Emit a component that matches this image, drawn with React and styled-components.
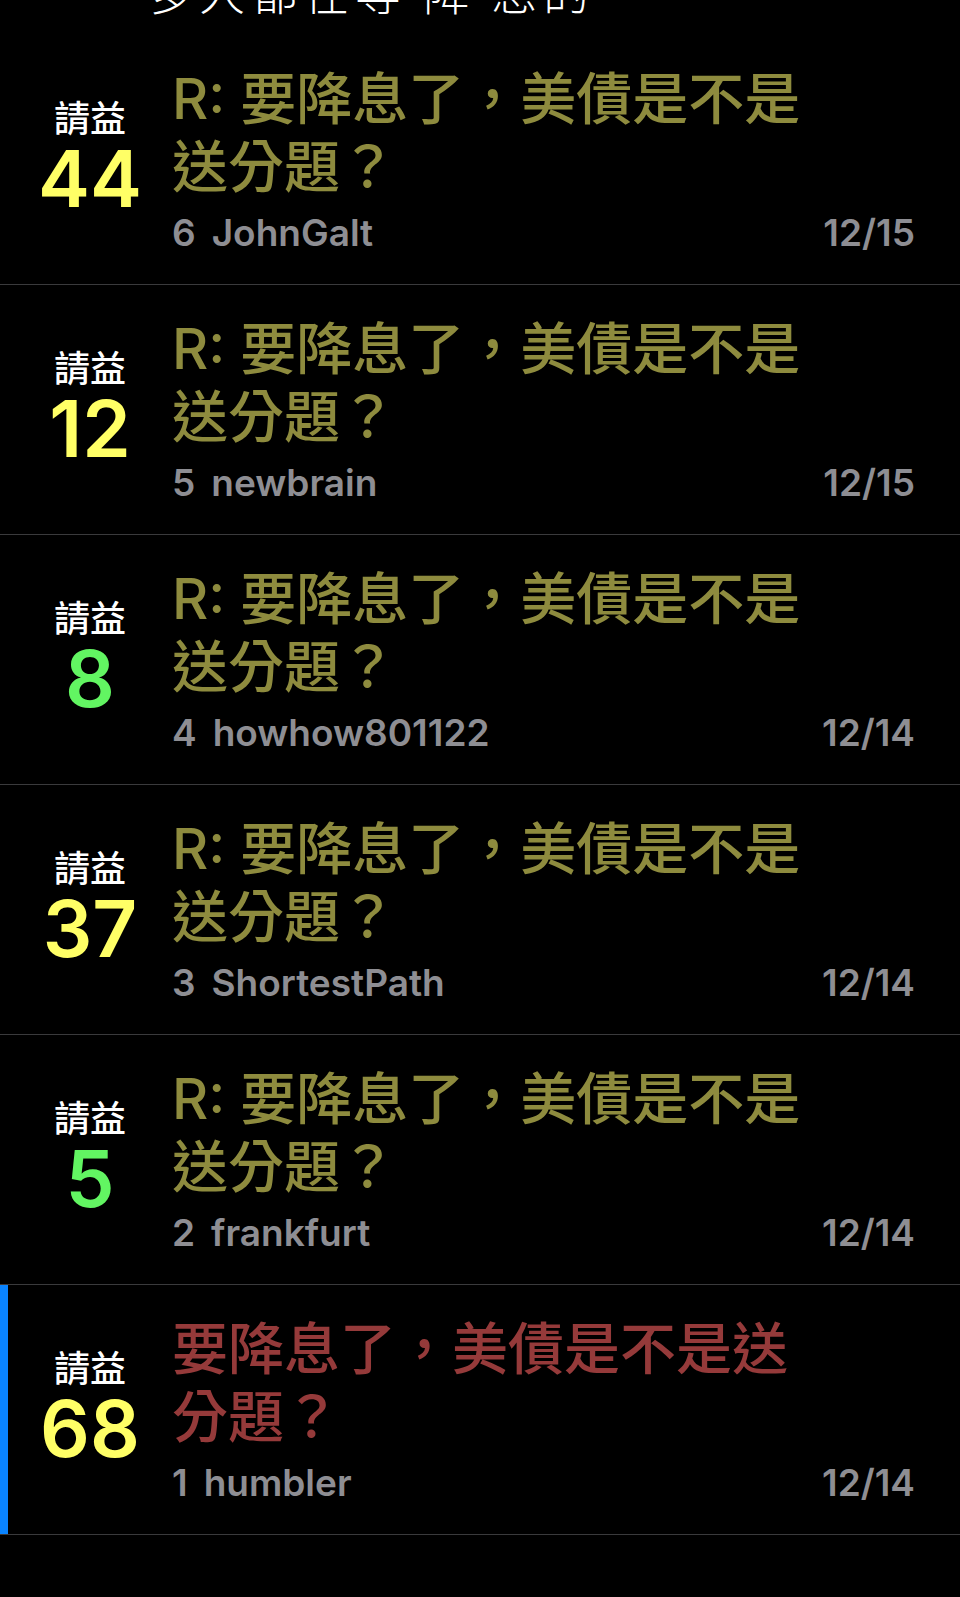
import styled, { createGlobalStyle } from "styled-components";

const GlobalStyle = createGlobalStyle`
  html, body {
    margin: 0;
    padding: 0;
    background: #000;
  }
  * {
    box-sizing: border-box;
  }
`;

const posts = [
  { score: 44, tone: "hot", title: "R: 要降息了，美債是不是送分題？", floor: 6, author: "JohnGalt", date: "12/15" },
  { score: 12, tone: "hot", title: "R: 要降息了，美債是不是送分題？", floor: 5, author: "newbrain", date: "12/15" },
  { score: 8, tone: "cool", title: "R: 要降息了，美債是不是送分題？", floor: 4, author: "howhow801122", date: "12/14" },
  { score: 37, tone: "hot", title: "R: 要降息了，美債是不是送分題？", floor: 3, author: "ShortestPath", date: "12/14" },
  { score: 5, tone: "cool", title: "R: 要降息了，美債是不是送分題？", floor: 2, author: "frankfurt", date: "12/14" },
  { score: 68, tone: "hot", title: "要降息了，美債是不是送分題？", floor: 1, author: "humbler", date: "12/14", original: true },
];

function App() {
  return (
    <Page>
      <GlobalStyle />
      <PreviousTail>
        <TailText>多人都在等 降 息的</TailText>
      </PreviousTail>
      <List>
        {posts.map((post) => (
          <Row key={post.floor}>
            <Indicator $active={post.original} />
            <ScoreBox>
              <Category>請益</Category>
              <Score $tone={post.tone}>{post.score}</Score>
            </ScoreBox>
            <Body>
              <Title $original={post.original}>{post.title}</Title>
              <Meta>
                <Author>
                  <span>{post.floor}</span>
                  <span>{post.author}</span>
                </Author>
                <span>{post.date}</span>
              </Meta>
            </Body>
          </Row>
        ))}
      </List>
    </Page>
  );
}

export default App;

const Page = styled.div`
  width: 960px;
  min-height: 1597px;
  background: #000;
  font-family: Inter, "Noto Sans CJK TC", sans-serif;
  overflow: hidden;
`;

const PreviousTail = styled.div`
  height: 35px;
  overflow: hidden;
  padding-left: 147px;
`;

const TailText = styled.div`
  margin-top: -36px;
  font-family: "Noto Sans CJK TC", sans-serif;
  font-size: 46px;
  line-height: 52px;
  font-weight: 300;
  color: #fff;
  letter-spacing: 6px;
`;

const List = styled.div`
  display: flex;
  flex-direction: column;
`;

const Row = styled.div`
  height: 250px;
  display: flex;
  align-items: center;
  border-bottom: 1px solid #3a3a3c;
`;

const Indicator = styled.div`
  width: 8px;
  align-self: stretch;
  flex-shrink: 0;
  background: ${(p) => (p.$active ? "#0a84ff" : "transparent")};
`;

const ScoreBox = styled.div`
  width: 164px;
  flex-shrink: 0;
  display: flex;
  flex-direction: column;
  align-items: center;
  padding-bottom: 4px;
`;

const Category = styled.div`
  font-family: "Noto Sans CJK TC", sans-serif;
  font-size: 36px;
  line-height: 40px;
  font-weight: 500;
  color: #fff;
`;

const Score = styled.div`
  margin-top: 3px;
  font-size: 78px;
  line-height: 80px;
  font-weight: 600;
  color: ${(p) => (p.$tone === "cool" ? "#62f562" : "#ffff66")};
`;

const Body = styled.div`
  flex: 1;
  display: flex;
  flex-direction: column;
  padding-right: 45px;
`;

const Title = styled.div`
  max-width: 650px;
  font-family: Inter, "Noto Sans CJK TC", sans-serif;
  font-size: 56px;
  line-height: 68px;
  font-weight: 500;
  color: ${(p) => (p.$original ? "#953a3a" : "#8e8b3e")};
`;

const Meta = styled.div`
  margin-top: 10px;
  display: flex;
  justify-content: space-between;
  font-size: 37px;
  line-height: 44px;
  font-weight: 600;
  color: #8e8e93;
`;

const Author = styled.div`
  display: flex;
  gap: 16px;
`;
